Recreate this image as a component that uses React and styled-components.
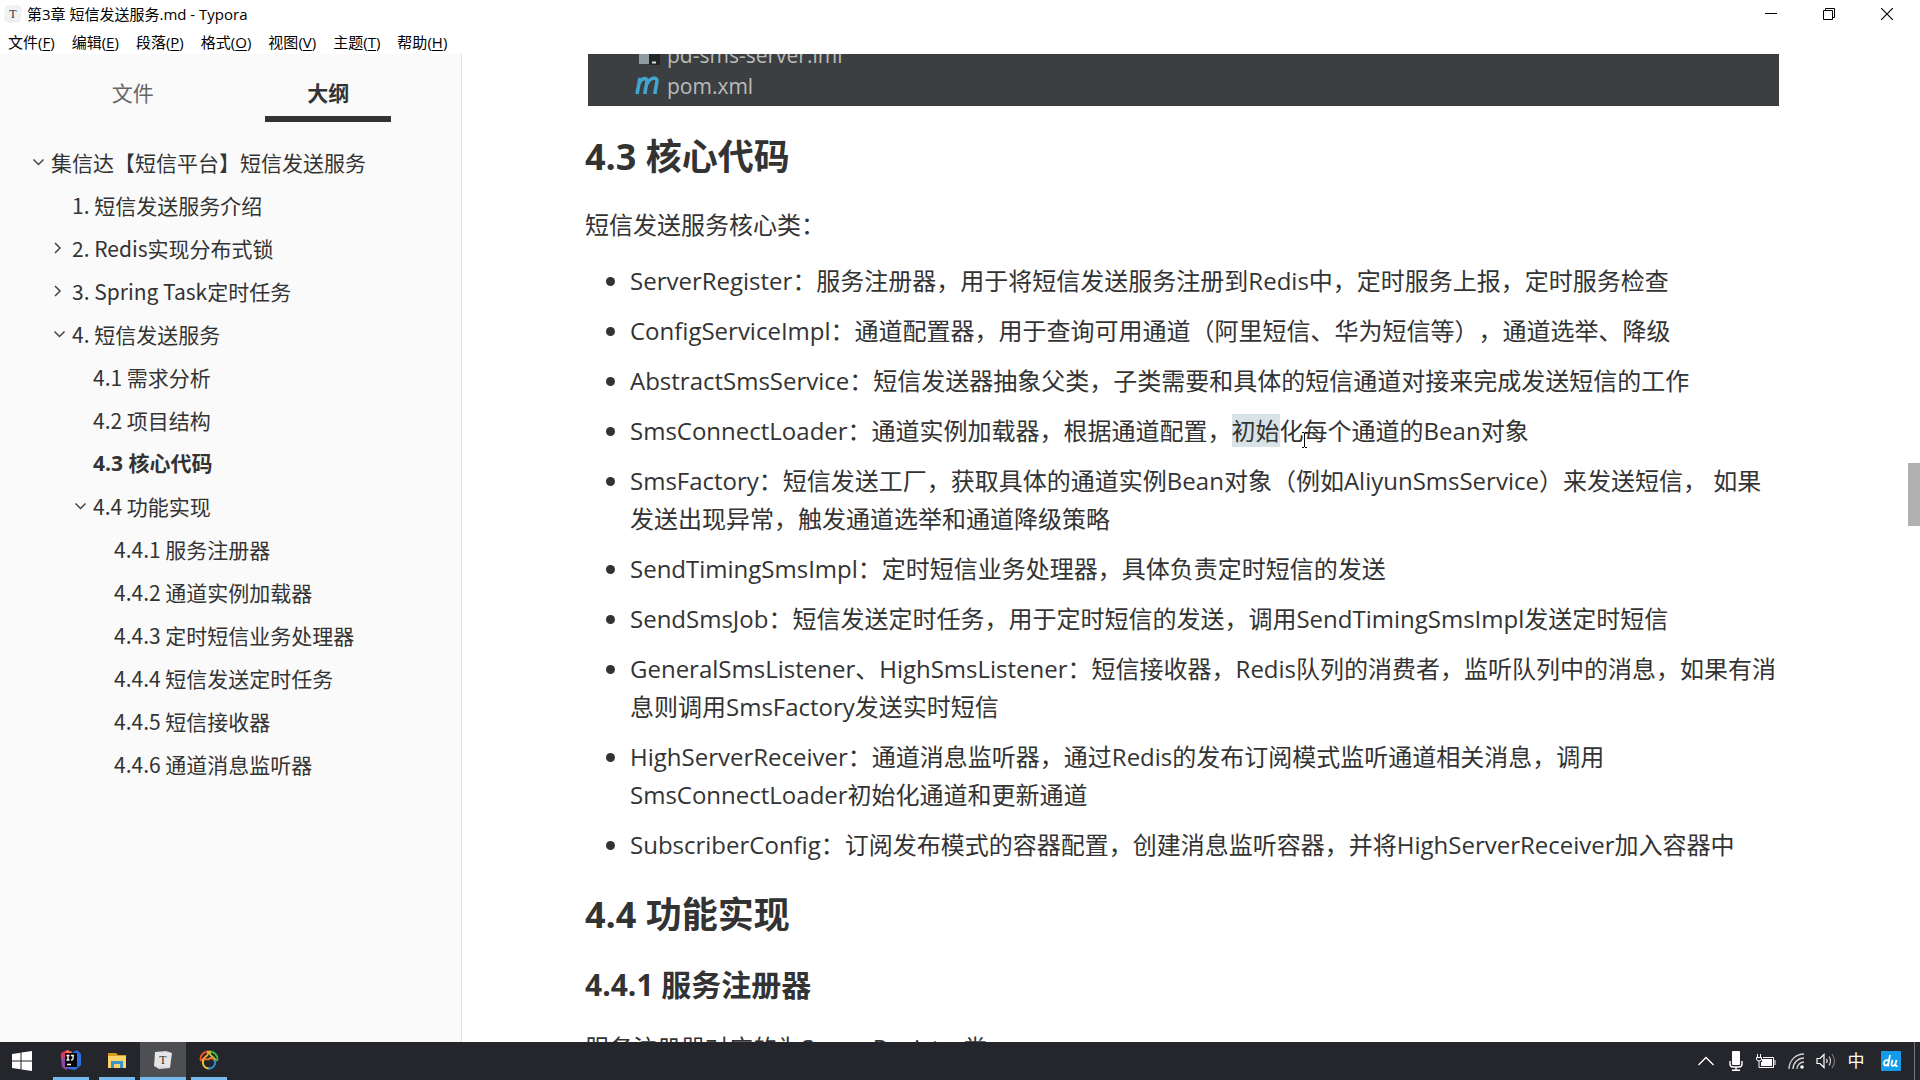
import styled, { createGlobalStyle, css } from 'styled-components';

const GlobalStyle = createGlobalStyle`
    * {
        box-sizing: border-box;
    }

    body {
        margin: 0;
        background-color: #ffffff;
        color: #333333;
        font-family: 'Open Sans', 'Noto Sans CJK SC', sans-serif;
        text-spacing-trim: space-all;
    }

    button {
        border: 0;
        padding: 0;
        background: none;
        color: inherit;
        font-family: inherit;
    }

    svg {
        display: block;
    }
`;

const Window = styled.div`
    display: flex;
    flex-direction: column;
    height: 100vh;
    overflow: hidden;
`;

const TitleBar = styled.header`
    display: flex;
    justify-content: space-between;
    align-items: center;
    height: 28px;
    padding: 0 4px;
    flex-shrink: 0;
    color: #000000;
`;

const Title = styled.div`
    display: flex;
    align-items: center;
    gap: 5px;
    font-size: 15px;
    line-height: 28px;
`;

const WindowControls = styled.div`
    display: flex;
`;

const ControlButton = styled.button`
    display: flex;
    justify-content: center;
    align-items: center;
    width: 58px;
    height: 28px;
`;

const MenuBar = styled.nav`
    display: flex;
    height: 26px;
    flex-shrink: 0;
`;

const MenuButton = styled.button`
    padding: 0 9px 0 8px;
    color: #000000;
    font-size: 15px;
    line-height: 28px;

    u {
        text-underline-offset: 2px;
    }
`;

const Workspace = styled.div`
    display: flex;
    flex: 1;
    min-height: 0;
`;

const Sidebar = styled.aside`
    width: 462px;
    flex-shrink: 0;
    background-color: #fafafa;
    border-right: 1px solid #e4e4e4;
`;

const Tabs = styled.div`
    display: flex;
    justify-content: space-evenly;
    margin-bottom: 18px;
`;

const Tab = styled.button`
    width: 126px;
    height: 68px;
    padding-top: 16px;
    border-bottom: 6px solid transparent;
    color: #666666;
    font-size: 21px;
    line-height: 30px;

    ${({ $active }) => $active && css`
        border-bottom-color: #333333;
        color: #333333;
        font-weight: 700;
    `}
`;

const Outline = styled.nav`
    display: flex;
    flex-direction: column;
`;

const OutlineLink = styled.a`
    display: flex;
    align-items: center;
    height: 43px;
    padding-left: ${({ $level }) => 9 + $level * 21}px;
    color: #333333;
    font-family: 'Noto Sans CJK SC', sans-serif;
    font-size: 21px;
    line-height: 30px;
    text-decoration: none;
    white-space: nowrap;

    ${({ $active }) => $active && css`
        font-family: 'Open Sans', 'Noto Sans CJK SC', sans-serif;
        font-weight: 700;
    `}
`;

const Arrow = styled.span`
    width: 21px;
    padding-left: 2px;
    flex-shrink: 0;
`;

const Editor = styled.main`
    flex: 1;
    min-width: 0;
    overflow: hidden;
`;

const Article = styled.article`
    max-width: 1200px;
    margin: 0 auto;
    font-size: 24px;
    line-height: 38px;
`;

const Figure = styled.figure`
    display: flex;
    flex-direction: column;
    justify-content: flex-end;
    height: 52px;
    margin: 0 6px 0 3px;
    padding: 0 0 5px 46px;
    overflow: hidden;
    background-color: #3c3f41;
    color: #bbbbbb;
    font-size: 21px;
    line-height: 30px;
`;

const FileRow = styled.div`
    display: flex;
    align-items: center;
    gap: 6px;
    height: 31px;
    flex-shrink: 0;
`;

const SectionHeading = styled.h2`
    margin: 25px 0 0;
    font-size: 36px;
    line-height: 52px;
`;

const SubHeading = styled.h3`
    margin: 23px 0 0;
    font-size: 30px;
    line-height: 42px;
`;

const Paragraph = styled.p`
    margin: 23px 0 0;
    white-space: nowrap;
`;

const List = styled.ul`
    display: flex;
    flex-direction: column;
    gap: 12px;
    margin: 18px 0 0;
    padding: 0 0 0 45px;
`;

const Selected = styled.mark`
    background-color: #d8e3e8;
    color: inherit;
    position: relative;
`;

const TextCursor = styled.svg`
    position: absolute;
    left: 69px;
    top: 18px;
`;

const ScrollTrack = styled.div`
    width: 12px;
    padding-top: 409px;
    flex-shrink: 0;
`;

const ScrollThumb = styled.div`
    height: 63px;
    background-color: #b0b0b0;
`;

const TaskBar = styled.footer`
    display: flex;
    justify-content: space-between;
    height: 38px;
    flex-shrink: 0;
    background-color: #24262b;
    color: #ffffff;
`;

const TaskGroup = styled.div`
    display: flex;
`;

const StartButton = styled.button`
    display: flex;
    justify-content: center;
    align-items: center;
    width: 48px;
    padding-right: 4px;
`;

const TaskButton = styled.button`
    display: flex;
    flex-direction: column;
    align-items: center;
    width: 46px;
    padding: 0 ${({ $active }) => ($active ? 0 : 5)}px;
    background-color: ${({ $active }) => ($active ? '#4e4f53' : 'transparent')};

    svg {
        margin: auto;
    }

    &::after {
        content: '';
        width: 100%;
        height: 3px;
        background-color: #76b9ed;
    }
`;

const TrayButton = styled.button`
    display: flex;
    justify-content: center;
    align-items: center;
    width: ${({ $wide }) => ($wide ? 40 : 30)}px;
    font-size: 17px;
    line-height: 36px;
`;

const ShowDesktop = styled.button`
    width: 6px;
    margin-left: 3px;
    border-left: 1px solid #777777;
`;

const menus = [
    ['文件', 'F'],
    ['编辑', 'E'],
    ['段落', 'P'],
    ['格式', 'O'],
    ['视图', 'V'],
    ['主题', 'T'],
    ['帮助', 'H'],
];

const outline = [
    { level: 1, text: '集信达【短信平台】短信发送服务', arrow: 'down' },
    { level: 2, text: '1. 短信发送服务介绍' },
    { level: 2, text: '2. Redis实现分布式锁', arrow: 'right' },
    { level: 2, text: '3. Spring Task定时任务', arrow: 'right' },
    { level: 2, text: '4. 短信发送服务', arrow: 'down' },
    { level: 3, text: '4.1 需求分析' },
    { level: 3, text: '4.2 项目结构' },
    { level: 3, text: '4.3 核心代码', active: true },
    { level: 3, text: '4.4 功能实现', arrow: 'down' },
    { level: 4, text: '4.4.1 服务注册器' },
    { level: 4, text: '4.4.2 通道实例加载器' },
    { level: 4, text: '4.4.3 定时短信业务处理器' },
    { level: 4, text: '4.4.4 短信发送定时任务' },
    { level: 4, text: '4.4.5 短信接收器' },
    { level: 4, text: '4.4.6 通道消息监听器' },
];

const arrows = {
    down: 'M1.5 4.5 L6.5 9.5 L11.5 4.5',
    right: 'M2 2 L7 7 L2 12',
};

function OutlineArrow({ direction }) {
    return (
        <svg width="13" height="13" fill="none" stroke="#444444" strokeWidth="1.5">
            <path d={arrows[direction]} />
        </svg>
    );
}

function TyporaIcon({ color = '#eeeeee' }) {
    return (
        <svg width="18" height="18" viewBox="0 0 18 18">
            <path d="M1 1 L12 0 L18 2 L16 17 L5 18 L0 15 Z" fill={color} />
            <path d="M1 1 L17 2 L16 15 L1 15 Z" fill="#ffffff" fillOpacity="0.25" />
            <text x="9" y="13" textAnchor="middle" fontSize="12" fontFamily="Liberation Serif, serif" fill="#333333">T</text>
        </svg>
    );
}

function WindowsIcon() {
    return (
        <svg width="20" height="20" viewBox="0 0 20 20" fill="#ffffff">
            <path d="M0 3 L8.5 1.8 V9.5 H0 Z M9.5 1.6 L20 0 V9.5 H9.5 Z M0 10.5 H8.5 V18.2 L0 17 Z M9.5 10.5 H20 V20 L9.5 18.4 Z" />
        </svg>
    );
}

function IdeaIcon() {
    return (
        <svg width="22" height="22" viewBox="0 0 22 22">
            <path d="M1 4 L7 1 L12 3 L9 12 L1 10 Z" fill="#e8305f" />
            <path d="M1 9 L8 8 L11 17 L6 21 L2 18 Z" fill="#8b4a9c" />
            <path d="M12 4 L17 1 L21 5 L21 16 L15 21 L8 20 L10 14 Z" fill="#2b6fe0" />
            <path d="M7 1 L12 3 L10 7 L5 5 Z" fill="#fc6f54" />
            <rect x="5" y="4" width="12" height="14" fill="#060606" />
            <path d="M6.5 6.5 H9.5 M8 6.5 V11 M6.5 11 H9.5 M11 6.5 H14 M13 6.5 V10 Q13 11 11 11 M7 15.5 H11" stroke="#ffffff" strokeWidth="1.3" fill="none" />
        </svg>
    );
}

function FolderIcon() {
    return (
        <svg width="20" height="20" viewBox="0 0 20 20">
            <path d="M1 3 H9 L11 5 H19 V9 H1 Z" fill="#d89b1d" />
            <path d="M1 6 H19 V18 H1 Z" fill="#fbd367" />
            <path d="M4 18 V11 H16 V18 H13 V14 H7 V18 Z" fill="#3d93c9" />
        </svg>
    );
}

function NavicatIcon() {
    return (
        <svg width="20" height="20" viewBox="0 0 20 20" fill="none" strokeWidth="1.8" strokeLinecap="round">
            <path d="M9 1.5 C5 1.500 1.500 5 1.500 9 C1.500 11.500 3 10.500 4 9" stroke="#f0532c" />
            <path d="M9 1.5 C10.500 6 5.500 6 4 9.500" stroke="#f5a623" />
            <path d="M11 1.5 C15 1.500 18.500 5 18.500 9 C18.500 11.500 17 10.500 16 9" stroke="#48b549" />
            <path d="M11 1.5 C9.500 6 14.500 6 16 9.500" stroke="#a5ce3b" />
            <path d="M4.500 10 C2.500 14 5.500 18.500 10 18.500" stroke="#f5c232" />
            <path d="M10 18.500 C14.500 18.500 17.500 14 15.500 10" stroke="#2c8fe0" />
            <path d="M5 9.500 C7 8 8.500 10.500 10 9 C11.500 7.500 13.500 8 15 9.500" stroke="#f07a2c" />
        </svg>
    );
}

export default function App() {
    return <Window>
        <GlobalStyle />
        <TitleBar>
            <Title>
                <TyporaIcon />
                <span>第3章 短信发送服务.md - Typora</span>
            </Title>
            <WindowControls>
                <ControlButton aria-label="最小化">
                    <svg width="12" height="12" stroke="#000000"><path d="M0 5.5 H12" /></svg>
                </ControlButton>
                <ControlButton aria-label="还原">
                    <svg width="12" height="12" fill="none" stroke="#000000"><path d="M0.5 2.5 H9.5 V11.5 H0.5 Z M2.5 2.5 V0.5 H11.5 V9.5 H9.5" /></svg>
                </ControlButton>
                <ControlButton aria-label="关闭">
                    <svg width="12" height="12" stroke="#000000" strokeWidth="1.2"><path d="M0 0 L12 12 M12 0 L0 12" /></svg>
                </ControlButton>
            </WindowControls>
        </TitleBar>

        <MenuBar>
            {menus.map(([label, key]) => (
                <MenuButton key={key}>{label}(<u>{key}</u>)</MenuButton>
            ))}
        </MenuBar>

        <Workspace>
            <Sidebar>
                <Tabs>
                    <Tab>文件</Tab>
                    <Tab $active>大纲</Tab>
                </Tabs>
                <Outline>
                    {outline.map((item) => (
                        <OutlineLink key={item.text} href="#" $level={item.level} $active={item.active}>
                            <Arrow>{item.arrow && <OutlineArrow direction={item.arrow} />}</Arrow>
                            {item.text}
                        </OutlineLink>
                    ))}
                </Outline>
            </Sidebar>

            <Editor>
                <Article>
                    <Figure>
                        <FileRow>
                            <svg width="27" height="24" viewBox="0 0 27 24">
                                <path d="M5 0 H21 V21 H5 Z" fill="#8f9ba3" />
                                <rect x="15" y="11" width="11" height="11" fill="#222426" />
                                <path d="M18 19.5 H22" stroke="#dddddd" strokeWidth="2" />
                            </svg>
                            pd-sms-server.iml
                        </FileRow>
                        <FileRow>
                            <svg width="27" height="24" viewBox="0 0 27 24" fill="none" stroke="#40a5cf" strokeWidth="3.6">
                                <path d="M3 20 L6 4 M5 10 C7 4 13 3 13 7 C13 10 11 15 11 20 M13 10 C15 4 23 2 23 7 C23 10 21 15 21 20" />
                            </svg>
                            pom.xml
                        </FileRow>
                    </Figure>

                    <SectionHeading>4.3 核心代码</SectionHeading>
                    <Paragraph>短信发送服务核心类：</Paragraph>
                    <List>
                        <li>ServerRegister：服务注册器，用于将短信发送服务注册到Redis中，定时服务上报，定时服务检查</li>
                        <li>ConfigServiceImpl：通道配置器，用于查询可用通道（阿里短信、华为短信等），通道选举、降级</li>
                        <li>AbstractSmsService：短信发送器抽象父类，子类需要和具体的短信通道对接来完成发送短信的工作</li>
                        <li>
                            SmsConnectLoader：通道实例加载器，根据通道配置，
                            <Selected>
                                初始
                                <TextCursor width="7" height="16" fill="none" stroke="#000000">
                                    <path d="M1 0.5 H3 M4 0.5 H6 M3.5 1 V15 M1 15.5 H3 M4 15.5 H6" />
                                </TextCursor>
                            </Selected>
                            化每个通道的Bean对象
                        </li>
                        <li>SmsFactory：短信发送工厂，获取具体的通道实例Bean对象（例如AliyunSmsService）来发送短信， 如果发送出现异常，触发通道选举和通道降级策略</li>
                        <li>SendTimingSmsImpl：定时短信业务处理器，具体负责定时短信的发送</li>
                        <li>SendSmsJob：短信发送定时任务，用于定时短信的发送，调用SendTimingSmsImpl发送定时短信</li>
                        <li>GeneralSmsListener、HighSmsListener：短信接收器，Redis队列的消费者，监听队列中的消息，如果有消息则调用SmsFactory发送实时短信</li>
                        <li>HighServerReceiver：通道消息监听器，通过Redis的发布订阅模式监听通道相关消息，调用SmsConnectLoader初始化通道和更新通道</li>
                        <li>SubscriberConfig：订阅发布模式的容器配置，创建消息监听容器，并将HighServerReceiver加入容器中</li>
                    </List>

                    <SectionHeading>4.4 功能实现</SectionHeading>
                    <SubHeading>4.4.1 服务注册器</SubHeading>
                    <Paragraph>服务注册器对应的为ServerRegister类</Paragraph>
                </Article>
            </Editor>
            <ScrollTrack>
                <ScrollThumb />
            </ScrollTrack>
        </Workspace>

        <TaskBar>
            <TaskGroup>
                <StartButton aria-label="开始"><WindowsIcon /></StartButton>
                <TaskButton aria-label="IntelliJ IDEA"><IdeaIcon /></TaskButton>
                <TaskButton aria-label="文件资源管理器"><FolderIcon /></TaskButton>
                <TaskButton aria-label="Typora" $active><TyporaIcon color="#dddddd" /></TaskButton>
                <TaskButton aria-label="Navicat"><NavicatIcon /></TaskButton>
            </TaskGroup>
            <TaskGroup>
                <TrayButton aria-label="显示隐藏的图标">
                    <svg width="16" height="10" fill="none" stroke="#ffffff" strokeWidth="1.4"><path d="M0.5 9 L8 1.5 L15.5 9" /></svg>
                </TrayButton>
                <TrayButton aria-label="麦克风">
                    <svg width="14" height="20" fill="none" stroke="#ffffff" strokeWidth="1.4">
                        <rect x="3" y="0" width="8" height="14" rx="1" fill="#ffffff" stroke="none" />
                        <path d="M1 10 V13 Q1 16 4 16 H10 Q13 16 13 13 V10 M7 16 V19 M3 19.3 H11" />
                    </svg>
                </TrayButton>
                <TrayButton aria-label="电池">
                    <svg width="20" height="14" fill="none" stroke="#ffffff">
                        <path d="M1.5 0 V3 M4.5 0 V3 M0.5 3.5 H5.5 V5 Q5.5 7 3 7 Q0.5 7 0.5 5 Z M3 7 V13.5 H17.5 V3.5 H7 M19 6 V11" />
                        <path d="M6 5 H16 V12 H5 V8 H6 Z" fill="#ffffff" stroke="none" />
                    </svg>
                </TrayButton>
                <TrayButton aria-label="网络">
                    <svg width="17" height="17" fill="none" stroke="#d5d5d5" strokeWidth="1.3">
                        <path d="M1 16 A15 15 0 0 1 16 1 M5 16 A11 11 0 0 1 16 5 M9 16 A7 7 0 0 1 16 9" />
                        <circle cx="14" cy="14" r="1.8" fill="#ffffff" stroke="none" />
                    </svg>
                </TrayButton>
                <TrayButton aria-label="音量">
                    <svg width="20" height="18" fill="none" stroke="#ffffff" strokeWidth="1.2">
                        <path d="M1 6.5 H4 L8 2.5 V15.5 L4 11.5 H1 Z M10.5 7 Q12 9 10.5 11" />
                        <path d="M13 4.5 Q16 9 13 13.5" stroke="#cccccc" />
                        <path d="M16 2 Q21 9 16 16" stroke="#777777" />
                    </svg>
                </TrayButton>
                <TrayButton>中</TrayButton>
                <TrayButton $wide aria-label="输入法">
                    <svg width="20" height="20">
                        <rect width="20" height="20" rx="1" fill="#149bea" />
                        <path d="M8 10 C5 8 3 10 3 12.500 C3 15.500 6 15 7.500 12 L9 4 M7.500 12 L7 15.500 M11.500 9 L10.500 13 C10.500 16 13.500 15 14.500 12.500 L15.500 9 M14.500 12.500 Q14 15.500 16.500 15" fill="none" stroke="#ffffff" strokeWidth="1.8" />
                    </svg>
                </TrayButton>
                <ShowDesktop aria-label="显示桌面" />
            </TaskGroup>
        </TaskBar>
    </Window>
}
